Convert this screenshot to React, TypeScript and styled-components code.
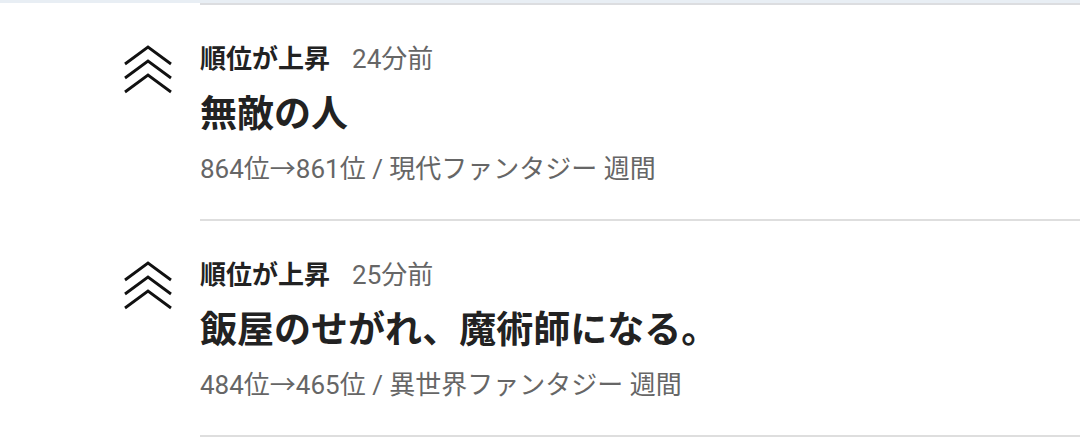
import styled, { createGlobalStyle } from "styled-components";

const GlobalStyle = createGlobalStyle`
  html, body {
    margin: 0;
    padding: 0;
    background: #ffffff;
  }
  body {
    font-family: Roboto, "Noto Sans CJK JP", "Noto Sans", sans-serif;
    color: #222;
  }
`;

type RankEvent = {
  id: number;
  label: string;
  ago: string;
  title: string;
  from: number;
  to: number;
  genre: string;
  period: string;
};

const EVENTS: RankEvent[] = [
  {
    id: 1,
    label: "順位が上昇",
    ago: "24分前",
    title: "無敵の人",
    from: 864,
    to: 861,
    genre: "現代ファンタジー",
    period: "週間",
  },
  {
    id: 2,
    label: "順位が上昇",
    ago: "25分前",
    title: "飯屋のせがれ、魔術師になる。",
    from: 484,
    to: 465,
    genre: "異世界ファンタジー",
    period: "週間",
  },
];

const TopStrip = styled.div`
  height: 3px;
  background: #e8eef4;
`;

const PrevDivider = styled.div`
  margin-left: 200px;
  height: 2px;
  background: #dcdde0;
`;

const List = styled.ul`
  list-style: none;
  margin: 0;
  padding: 0;
`;

const Row = styled.li`
  display: flex;
  align-items: flex-start;
`;

const IconCell = styled.div`
  width: 200px;
  flex-shrink: 0;
  padding: 40px 0 0 124px;
  box-sizing: border-box;

  svg {
    display: block;
  }
`;

const Content = styled.div`
  flex: 1;
  padding: 37px 0 33px;
  border-bottom: 2px solid #dedede;
`;

const Header = styled.div`
  display: flex;
  align-items: baseline;
  gap: 22px;
  font-size: 26px;
  line-height: 34px;
`;

const Label = styled.span`
  font-weight: 700;
  color: #222;
`;

const Ago = styled.span`
  color: #666;
`;

const Title = styled.h2`
  margin: 16px 0 0;
  font-size: 37px;
  line-height: 46px;
  font-weight: 700;
  color: #222;
`;

const Meta = styled.div`
  margin-top: 14px;
  font-size: 26px;
  line-height: 34px;
  color: #666;
`;

function RiseIcon() {
  return (
    <svg width="48" height="50" viewBox="0 0 48 50" fill="none">
      {[0, 14, 28].map((dy) => (
        <polyline
          key={dy}
          points={`1,${19 + dy} 24,${2 + dy} 47,${19 + dy}`}
          stroke="#111"
          strokeWidth="2.8"
          strokeLinejoin="miter"
        />
      ))}
    </svg>
  );
}

export default function App() {
  return (
    <>
      <GlobalStyle />
      <TopStrip />
      <PrevDivider />
      <List>
        {EVENTS.map((ev) => (
          <Row key={ev.id}>
            <IconCell>
              <RiseIcon />
            </IconCell>
            <Content>
              <Header>
                <Label>{ev.label}</Label>
                <Ago>{ev.ago}</Ago>
              </Header>
              <Title>{ev.title}</Title>
              <Meta>
                {ev.from}位→{ev.to}位 / {ev.genre} {ev.period}
              </Meta>
            </Content>
          </Row>
        ))}
      </List>
    </>
  );
}
